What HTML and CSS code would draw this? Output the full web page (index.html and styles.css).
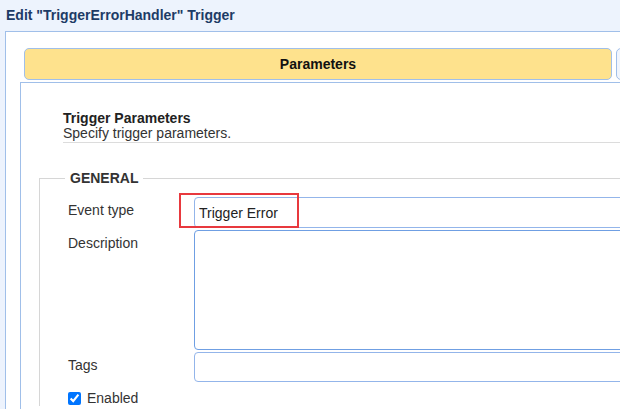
FILE: index.html
```html
<!DOCTYPE html>
<html lang="en">
<head>
  <meta charset="UTF-8">
  <meta name="viewport" content="width=device-width, initial-scale=1.0">
  <title>Edit Trigger</title>
  <link rel="stylesheet" href="styles.css">
</head>
<body>
  <div class="title">Edit "TriggerErrorHandler" Trigger</div>
  <div class="dialog">
    <div class="tabs">
      <div class="tab active">Parameters</div>
      <div class="tab"></div>
    </div>
    <div class="pane">
      <div class="section-head">
        <h2>Trigger Parameters</h2>
        <p>Specify trigger parameters.</p>
      </div>
      <fieldset class="group">
        <legend>GENERAL</legend>
        <div class="row">
          <label for="event-type">Event type</label>
          <div class="field">
            <input type="text" id="event-type" value="Trigger Error">
            <span class="mark"></span>
          </div>
        </div>
        <div class="row">
          <label for="description">Description</label>
          <div class="field">
            <textarea id="description"></textarea>
          </div>
        </div>
        <div class="row">
          <label for="tags">Tags</label>
          <div class="field">
            <input type="text" id="tags">
          </div>
        </div>
        <div class="check">
          <input type="checkbox" id="enabled" checked>
          <label for="enabled">Enabled</label>
        </div>
      </fieldset>
    </div>
  </div>
</body>
</html>
```

FILE: styles.css
```css
body {
  margin: 0;
  background: #edf3fd;
  font-family: "Liberation Sans", Arial, sans-serif;
  font-size: 14px;
  color: #333;
  overflow: hidden;
  height: 409px;
}

.title {
  height: 31px;
  line-height: 31px;
  padding-left: 6px;
  font-weight: bold;
  color: #1d3b66;
}

.dialog {
  margin-left: 5px;
  border-left: 1px solid #a0bfe9;
  border-top: 1px solid #a0bfe9;
  background: #fff;
  padding: 16px 0 0 14px;
  height: 377px;
  overflow: hidden;
}

.tabs {
  display: flex;
  gap: 4px;
  margin-left: 4px;
  width: 800px;
}

.tab {
  flex-shrink: 0;
  height: 30px;
  line-height: 30px;
  border: 1px solid #a0bfe9;
  border-radius: 5px;
  background: #f0f5fd;
  font-weight: bold;
  color: #111;
  text-align: center;
  width: 200px;
}

.tab.active {
  width: 586px;
  background: #fee28d;
}

.pane {
  margin-top: 2px;
  border-left: 1px solid #a0bfe9;
  border-top: 1px solid #a0bfe9;
  height: 400px;
}

.section-head {
  padding: 28px 0 1px 0;
  margin-left: 42px;
  border-bottom: 1px solid #dcdcdc;
}

.section-head h2 {
  margin: 0;
  font-size: 14px;
  line-height: 15px;
  color: #222;
}

.section-head p {
  margin: 0;
  line-height: 15px;
  color: #333;
}

.group {
  margin: 27px 0 0 18px;
  padding: 11px 0 0 28px;
  border: 1px solid #d6d6d6;
  border-right: none;
  border-bottom: none;
  min-width: 0;
}

.group legend {
  margin-left: -3px;
  padding: 0 5px;
  font-weight: bold;
  line-height: 16px;
  color: #333;
}

.row {
  display: flex;
  margin-bottom: 2px;
}

.row label {
  width: 126px;
  flex-shrink: 0;
  padding-top: 5px;
  line-height: 16px;
}

.field {
  position: relative;
  flex-shrink: 0;
  width: 600px;
}

.field input,
.field textarea {
  box-sizing: border-box;
  width: 100%;
  margin: 0;
  border: 1px solid #93b5ea;
  border-radius: 4px;
  padding: 0 4px;
  font-family: "Liberation Sans", Arial, sans-serif;
  font-size: 14px;
  color: #222;
  background: #fff;
  display: block;
}

#event-type {
  height: 31px;
}

.field textarea {
  height: 120px;
  border-color: #6f9fe3;
  resize: none;
}

#tags {
  height: 30px;
}

.mark {
  position: absolute;
  left: -15px;
  top: -4px;
  width: 116px;
  height: 31px;
  border: 2px solid #e8393e;
}

.check {
  display: flex;
  align-items: center;
  margin-top: 8px;
  height: 16px;
}

.check input {
  margin: 0 6px 0 0;
  width: 13px;
  height: 13px;
}
```
